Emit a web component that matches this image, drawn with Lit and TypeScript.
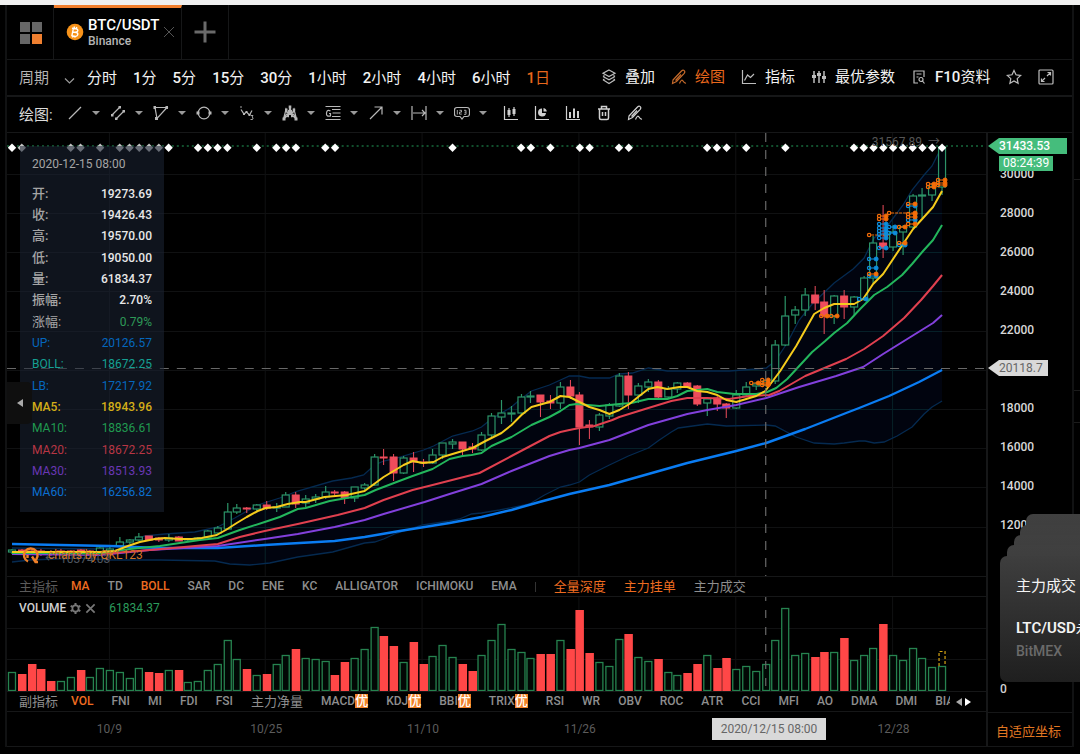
import { LitElement, html, svg, css, nothing } from "lit";
import { customElement } from "lit/decorators.js";
import { classMap } from "lit/directives/class-map.js";

type Mark = [number, number, number, string];

const X0 = 12;
const STEP = 9.8;
const cx = (i: number) => X0 + STEP * i;

// up/down flag, body top, body bottom, high, low (chart units)
const CANDLES: Array<[string, number, number, number, number]> = [
  ["g", 550, 552, 549, 554], ["r", 550, 552, 549, 555], ["r", 551, 552, 550, 554], ["r", 551, 553, 549, 556],
  ["r", 552, 554, 550, 556], ["r", 551, 553, 549, 555], ["r", 551, 552, 550, 554], ["r", 550, 553, 549, 555],
  ["r", 551, 553, 550, 555], ["g", 548, 553, 547, 554], ["g", 549, 551, 546, 553], ["g", 542, 546, 537, 547],
  ["g", 540, 542, 539, 544], ["g", 537, 540, 533, 541], ["r", 536, 540, 536, 541], ["r", 538, 540, 537, 542],
  ["g", 538, 540, 534, 542], ["r", 537, 541, 536, 541], ["g", 539, 540, 538, 541], ["g", 538, 539, 537, 540],
  ["g", 531, 537, 530, 538], ["g", 528, 533, 526, 534], ["g", 512, 529, 503, 530], ["g", 508, 512, 504, 514],
  ["r", 508, 509, 507, 513], ["g", 505, 509, 504, 512], ["r", 505, 508, 501, 510], ["g", 507, 508, 503, 512],
  ["g", 495, 507, 492, 507], ["r", 495, 504, 492, 508], ["g", 499, 503, 495, 507], ["g", 497, 499, 494, 503],
  ["g", 492, 497, 486, 499], ["r", 492, 493, 490, 496], ["r", 492, 498, 491, 504], ["g", 487, 498, 487, 502],
  ["g", 485, 488, 483, 491], ["g", 457, 485, 454, 486], ["r", 457, 458, 449, 465], ["r", 457, 473, 454, 481],
  ["g", 458, 473, 456, 474], ["r", 458, 462, 452, 472], ["r", 462, 463, 459, 467], ["g", 455, 463, 449, 464],
  ["g", 443, 455, 443, 459], ["g", 442, 444, 439, 449], ["r", 442, 449, 442, 455], ["r", 447, 449, 443, 453],
  ["g", 435, 450, 432, 451], ["g", 416, 435, 413, 438], ["g", 413, 417, 400, 424], ["g", 413, 414, 406, 422],
  ["g", 397, 413, 394, 415], ["g", 396, 397, 391, 403], ["r", 395, 402, 395, 417], ["r", 401, 403, 395, 409],
  ["g", 387, 403, 382, 409], ["r", 387, 396, 380, 399], ["r", 395, 427, 392, 445], ["r", 425, 427, 420, 439],
  ["g", 415, 427, 413, 431], ["g", 405, 416, 403, 419], ["g", 376, 406, 373, 407], ["r", 376, 395, 372, 409],
  ["g", 386, 395, 383, 403], ["g", 382, 387, 379, 392], ["r", 382, 397, 380, 399], ["g", 389, 397, 386, 399],
  ["g", 383, 389, 382, 393], ["r", 383, 387, 382, 388], ["r", 386, 404, 385, 406], ["g", 399, 403, 398, 416],
  ["r", 398, 404, 396, 411], ["r", 404, 408, 403, 418], ["g", 395, 408, 390, 409], ["g", 387, 395, 382, 396],
  ["g", 384, 386, 382, 390], ["g", 381, 385, 379, 387], ["g", 345, 381, 340, 384], ["g", 316, 345, 296, 346],
  ["g", 310, 315, 306, 324], ["g", 295, 310, 288, 316], ["r", 295, 303, 286, 310], ["r", 302, 316, 290, 334],
  ["g", 296, 316, 295, 324], ["r", 296, 307, 290, 319], ["g", 297, 307, 296, 316], ["g", 278, 299, 276, 301],
  ["g", 243, 278, 236, 283], ["r", 243, 248, 205, 258], ["g", 232, 247, 225, 251], ["g", 227, 232, 225, 255],
  ["g", 196, 227, 194, 228], ["g", 195, 196, 188, 218], ["g", 187, 195, 183, 201], ["g", 147, 187, 145, 195],
];

const VOLUME: number[] = [
  19, 17, 27, 22, 10, 10, 14, 21, 14, 23, 21, 19, 13, 23, 19, 18, 21, 21, 9, 10, 21, 27, 51, 32, 22, 16, 17, 27, 36,
  42, 33, 32, 30, 16, 29, 33, 42, 64, 55, 45, 29, 49, 27, 35, 46, 34, 27, 20, 36, 51, 67, 42, 39, 33, 37, 37, 51, 42,
  81, 38, 29, 25, 52, 57, 34, 30, 32, 19, 16, 18, 27, 36, 23, 33, 22, 25, 20, 27, 51, 83, 36, 38, 34, 39, 39, 53, 31,
  36, 43, 67, 36, 31, 43, 33, 24, 25,
];
const VOLUME_DOWN = new Set([
  1, 2, 3, 4, 7, 14, 15, 17, 24, 26, 29, 33, 34, 38, 39, 41, 42, 46, 47, 54, 55, 57, 58, 59, 63, 66, 69, 70, 72, 73,
  82, 83, 85, 89,
]);

const UP =
  "12,548 100,549 125,543 145,536 165,534 195,532 218,527 235,518 258,505 280,498 298,491 333,481 352,478 364,475 375,465 384,461 397,458 424,450 434,446 453,436 473,431 482,427 492,419 512,407 520,400 532,391 550,385 561,380 570,376 580,376 590,378 610,378 620,374 633,373 649,368 668,371 708,371 730,371 757,369 767,368 776,361 788,343 800,320 813,304 835,283 854,269 865,258 875,238 886,229 904,205 913,190 925,175 933,166 939,154 943,145";
const LB =
  "12,562 30,560 80,558 110,560 160,560 215,561 230,564 250,565 270,563 298,557 333,552 365,543 375,542 384,539 395,534 423,525 450,521 460,519 472,514 482,513 500,510 530,504 545,495 561,487 570,485 580,482 590,475 610,465 629,456 649,448 660,440 672,432 679,428 708,424 727,426 767,425 776,426 797,437 815,443 835,444 845,443 860,441 866,441 875,443 885,442 898,436 913,427 925,414 933,407 943,401";
const LINES: Array<[string, string]> = [
  ["ma60", "12,544 60,545 110,546 160,548 218,548 265,545 300,543 335,541 365,537 400,531 450,523 482,517 512,510 540,502 570,494 610,485 649,474 688,463 737,451 767,443 806,429 847,413 860,408 890,396 920,382 943,370"],
  ["ma30", "12,554 100,555 150,550 218,546 265,539 298,534 335,527 365,520 384,514 425,502 450,494 482,484 512,471 550,456 570,450 580,448 610,440 649,425 688,414 708,410 737,405 767,398 800,387 837,376 864,367 884,354 913,336 934,323 943,315"],
  ["ma20", "12,552 100,554 150,550 218,544 240,537 265,531 298,524 338,515 365,508 384,500 413,490 433,485 480,473 512,456 550,436 561,432 570,430 580,428 595,426 613,420 620,417 649,408 672,401 688,398 708,398 730,399 750,396 770,395 780,391 806,376 847,359 865,349 884,336 905,318 922,300 934,286 943,275"],
  ["ma10", "12,553 100,553 130,549 160,546 200,540 218,538 240,530 265,522 280,517 298,509 306,508 330,501 347,498 365,495 376,490 397,482 413,476 433,469 450,459 463,456 472,455 482,453 492,446 512,437 532,425 550,417 561,411 570,405 577,404 600,406 620,404 632,403 649,399 668,399 678,396 688,391 708,389 718,392 735,394 757,394 768,392 777,388 788,379 813,352 826,341 835,333 848,323 861,309 875,295 888,287 903,275 913,264 924,251 934,240 943,225"],
  ["ma5", "12,552 100,552 115,551 128,546 140,542 155,539 165,538 180,539 192,539 202,538 217,535 226,530 237,523 247,517 258,511 266,508 277,507 288,504 300,502 306,502 325,497 347,495 365,491 384,477 404,465 413,461 423,463 434,462 443,457 463,451 473,448 486,441 502,433 512,425 522,415 532,407 550,402 561,396 570,397 580,402 590,407 600,410 610,414 620,410 630,404 640,396 649,389 658,387 668,389 680,387 688,387 698,391 708,392 718,395 727,400 737,402 747,399 757,396 766,391 781,371 797,346 815,314 825,308 835,304 855,304 864,299 874,284 884,274 902,247 914,229 924,218 934,207 943,191"],
];

const DIAMONDS = [
  0, 1, 6, 7, 9, 11, 12, 13, 14, 15, 16, 19, 20, 21, 22, 25, 27, 28, 29, 32, 33, 45, 52, 53, 55, 58, 59, 62, 63, 71,
  72, 73, 75, 79, 86, 87, 88, 89, 90, 91, 92, 93, 94, 95,
];

// hollow end x, solid end x, y, colour class
const TRADES: Mark[] = [
  [752, 759, 383, "o"], [763, 769, 380, "o"], [763, 769, 383, "o"], [763, 769, 385, "o"],
  [822, 828, 316, "o"], [832, 838, 316, "o"], [860, 867, 299, "b"],
  [870, 877, 259, "b"], [870, 877, 268, "b"], [870, 877, 276, "b"], [870, 877, 274, "o"], [870, 887, 235, "o"],
  [880, 887, 224, "b"], [880, 887, 228, "b"], [880, 887, 231, "b"], [880, 887, 234, "b"], [880, 887, 238, "b"],
  [880, 887, 248, "b"], [880, 887, 216, "o"], [880, 887, 219, "o"],
  [890, 896, 227, "b"], [890, 896, 233, "b"], [900, 906, 245, "b"], [900, 906, 227, "o"], [890, 916, 213, "o"],
  [900, 906, 243, "o"], [909, 916, 206, "b"], [909, 916, 220, "b"], [909, 916, 204, "o"], [909, 916, 214, "o"],
  [909, 916, 217, "o"], [909, 916, 224, "o"], [929, 935, 184, "o"], [929, 935, 187, "o"],
  [939, 946, 180, "o"], [939, 946, 183, "o"], [939, 946, 185, "o"],
];

const READOUT: Array<[string, string, string]> = [
  ["开", "19273.69", "plain"], ["收", "19426.43", "plain"], ["高", "19570.00", "plain"], ["低", "19050.00", "plain"],
  ["量", "61834.37", "plain"], ["振幅", "2.70%", "plain"], ["涨幅", "0.79%", "gain"],
  ["UP", "20126.57", "band"], ["BOLL", "18672.25", "mid"], ["LB", "17217.92", "band"], ["MA5", "18943.96", "m5"],
  ["MA10", "18836.61", "m10"], ["MA20", "18672.25", "m20"], ["MA30", "18513.93", "m30"], ["MA60", "16256.82", "m60"],
];

const PERIODS: Array<[string, string]> = [
  ["", "分时"], ["1", "分"], ["5", "分"], ["15", "分"], ["30", "分"], ["1", "小时"], ["2", "小时"], ["4", "小时"],
  ["6", "小时"], ["1", "日"],
];
const MAIN = ["MA", "TD", "BOLL", "SAR", "DC", "ENE", "KC", "ALLIGATOR", "ICHIMOKU", "EMA"];
const ORDERS = ["全量深度", "主力挂单", "主力成交"];
const SUB = [
  "VOL", "FNI", "MI", "FDI", "FSI", "主力净量", "MACD*", "KDJ*", "BBI*", "TRIX*", "RSI", "WR", "OBV", "ROC", "ATR",
  "CCI", "MFI", "AO", "DMA", "DMI", "BIAS",
];
const PRICES = ["30000", "28000", "26000", "24000", "22000", "", "18000", "16000", "14000", "12000"];
const DATES = ["10/9", "10/25", "11/10", "11/26", "", "12/28"];

const icon = (body: unknown) => html`<svg class="icon" viewBox="0 0 16 16" aria-hidden="true">${body}</svg>`;

const PEN = svg`<path d="M2 11 10.500 2q1.500-1.500 2.700-.4t0 2.700L5.500 12.500 1.500 14.500ZM4.500 11.500 10 5.500M8.500 14.500q2-5 3.500-2.500t3 2"/>`;

const TOOLS: Array<[string, unknown]> = [
  ["线段", svg`<path d="M2 14 14 2"/>`],
  ["平行线", svg`<path d="M2 10 10 2M6 14 14.500 5.500"/><path class="solid" d="M1 9h2.500v2.500H1zM8.500 1H11v2.500H8.500zM5 12.500h2.500V15H5zM12.500 5H15v2.500h-2.500z"/>`],
  ["形状", svg`<path d="M2 2.500h12L4 13.500Z"/><path class="solid" d="M.5 1H3v3H.5zM12.500 1H15v3h-2.500zM2 12h3v3H2z"/>`],
  ["圆", svg`<circle cx="8" cy="8" r="5.800"/><path class="solid" d="M.5 6.500h3v3h-3zM12.500 6.500h3v3h-3z"/>`],
  ["波浪", svg`<path d="m2 4.500 3 4.500 2.500-2 3 3L13 5.500"/><path class="solid" d="M4 8h2v2H4zM6.500 6h2v2h-2zM9.500 9h2v2h-2z"/><path d="M1 2h2M12 10.500h2l-1 1.500q2 .5.500 2.500h-2" stroke-width=".9"/>`],
  ["形态", svg`<path d="M1.500 14 4 4.500 6 11l2-9 2 9 2-6.500 2.500 9.500M1.500 14 6 7l8.500 7M14.500 14 10 7 1.500 14"/><path class="solid" d="M.5 12.500h3v3h-3zM3 3.500h2.500V6H3zM6.700.5h2.600v3H6.700zM10.700 3.500h2.500V6h-2.500zM12.500 12.500h3v3h-3zM5 9.500h2V12H5zM9 9.500h2V12H9zM6 5h4v5H6z"/>`],
  ["斐波那契", svg`<path d="M.5 1.500h15M7 4.500h8.500M7.500 8h8M7 11.500h8.500M.5 14.500h15M5.500 6Q2 4 1.500 8t4 3V8.500H4"/>`],
  ["箭头", svg`<path d="M2 14 14 2M6.500 2H14v7.500"/>`],
  ["测量", svg`<path d="M1 1v14M15 1v14M2 8h12M11 5l3 3-3 3"/>`],
  ["标注", svg`<path d="M3 2.500h10q2.500 0 2.500 2.500v4q0 2.500-2.500 2.500h-3L8 14l-2-2.500H3Q.5 11.500.5 9V5Q.5 2.500 3 2.500Z"/><path d="M3.300 5v4.500M5.500 5.300h2v1.800h-2v2h2.300M10 5.300h2v4h-2M10.500 7.200H12" stroke-width=".9"/>`],
];

const PLAIN_TOOLS: Array<[string, unknown]> = [
  ["K线", svg`<path d="M1.500 1v13.500H15"/><path d="M6 3v9M11 2v9"/><path class="solid" d="M4.500 5h3v5h-3zM9.500 4h3v5h-3z"/>`],
  ["筹码", svg`<path d="M1.500 1v13.500H15"/><path class="solid" d="M8 3.500a4 4 0 1 0 4 4.500H8ZM9.500 3v3.500h3.300Q12.500 3.500 9.500 3Z"/>`],
  ["成交量", svg`<path d="M1.500 1v13.500H15"/><path class="solid" d="M4 7h2v6H4zM8 3.500h2V13H8zM12 6h2v7h-2z"/>`],
  ["删除", svg`<path d="M2 4h12M5.500 4V1.500h5V4M3.500 4v9q0 1.500 1.500 1.500h6q1.500 0 1.500-1.500V4M6.500 7v4M9.500 7v4" stroke-width="1.500"/>`],
  ["清除画笔", PEN],
];

@customElement("price-chart")
class PriceChart extends LitElement {
  static styles = css`
    :host { display: block; position: absolute; inset: 0; }
    svg { display: block; width: 100%; height: 100%; }
    .grid { stroke: #101112; }
    .grid.in { stroke: #062028; }
    .band { fill: #01040f; }
    .edge { fill: none; stroke: #052a50; stroke-width: 1.3; }
    .up { fill: #00050c; stroke: #2c9468; stroke-width: 1.2; }
    .down { fill: #ef4c5c; stroke: #ef4c5c; stroke-width: 1; }
    .line { fill: none; stroke-width: 2; stroke-linejoin: round; }
    .ma5 { stroke: #f5cb1c; } .ma10 { stroke: #23b65c; } .ma20 { stroke: #e0404f; }
    .ma30 { stroke: #8240dc; } .ma60 { stroke: #0a7cf2; stroke-width: 2.4; }
    .last { stroke: #176a3c; stroke-width: 1.6; stroke-dasharray: 2 3; }
    .cross { stroke: #686868; stroke-width: 1.2; stroke-dasharray: 9 8; }
    .gem { fill: #fff; }
    .gem.under { fill: #c4c4c4; }
    .o { stroke: #f46d08; --dot: #f46d08; } .b { stroke: #0d8edc; --dot: #0d8edc; }
    .ring { fill: none; stroke-width: 1.2; } .dot { fill: var(--dot); }
    .tie { stroke-width: 1.2; stroke-dasharray: 3 1; }
  `;
  render() {
    const rows = [174, 213, 252, 291, 331, 370, 409, 448, 487, 527];
    const cols = [10, 26, 42, 58, 74, 90].map(cx);
    const area = UP + " " + LB.split(" ").reverse().join(" ");
    return html`<svg viewBox="7 133 980 443" preserveAspectRatio="none" role="img" aria-label="BTC/USDT 日K线">
      <defs><clipPath id="inside"><polygon points=${area} /></clipPath></defs>
      <polygon class="band" points=${area} />
      ${["", "in"].map((k) => svg`<g clip-path=${k ? "url(#inside)" : "none"}>
        ${rows.map((y) => svg`<path class="grid ${k}" d="M7 ${y + 0.5}H987"/>`)}
        ${cols.map((x) => svg`<path class="grid ${k}" d="M${Math.floor(x) - 0.5} 133V576"/>`)}</g>`)}
      <polyline class="edge" points=${UP} /><polyline class="edge" points=${LB} />
      <path class="last" d="M7 146H987" />
      ${CANDLES.map(([d, t, b, h, l], i) => {
        const x = Math.round(cx(i)), c = d === "g" ? "up" : "down";
        return svg`<path class=${c} d="M${x} ${h}V${t}M${x} ${b}V${l}"/><rect class=${c} x=${x - 3.5} y=${t} width="7" height=${Math.max(1, b - t)} />`;
      })}
      ${LINES.map(([c, p]) => svg`<polyline class="line ${c}" points=${p}/>`)}
      ${TRADES.map(([a, b, y, c]) => svg`<g class=${c}><circle class="ring" cx=${a} cy=${y} r="1.700"/><path class="tie" d="M${a + 2} ${y}H${b}"/><circle class="dot" cx=${b} cy=${y} r="2"/></g>`)}
      <path class="cross" d="M7 368.500H987" /><path class="cross" d="M766.500 133V576" />
      ${DIAMONDS.map((i) => svg`<path class="gem ${i > 0 && i < 16 ? "under" : ""}" d="M${cx(i)} 143.500l4.200 4.200-4.200 4.200-4.200-4.200z"/>`)}
    </svg>`;
  }
}

@customElement("volume-chart")
class VolumeChart extends LitElement {
  static styles = css`
    :host { display: block; position: absolute; inset: 0; }
    svg { display: block; width: 100%; height: 100%; }
    .grid { stroke: #101112; }
    .up { fill: #020805; stroke: #26834f; stroke-width: 1.3; }
    .down { fill: #ff4747; }
    .guess { fill: none; stroke: #d6a414; stroke-width: 1.2; stroke-dasharray: 3 2; }
    .cross { stroke: #686868; stroke-width: 1.2; stroke-dasharray: 8 9; }
  `;
  render() {
    return html`<svg viewBox="7 597 980 94" preserveAspectRatio="none" role="img" aria-label="成交量">
      <path class="grid" d="M7 628.500H987M7 659.500H987" />
      ${[10, 26, 42, 58, 74, 90].map((i) => svg`<path class="grid" d="M${Math.floor(cx(i)) - 0.5} 597V691"/>`)}
      ${VOLUME.map((v, i) => {
        const x = Math.round(cx(i));
        return VOLUME_DOWN.has(i)
          ? svg`<rect class="down" x=${x - 4} y=${691 - v} width="8.500" height=${v} />`
          : svg`<rect class="up" x=${x - 3.5} y=${691.5 - v} width="7" height=${v - 1} />`;
      })}
      <path class="guess" d="M940 666V651.500H946V666" />
      <path class="cross" d="M766.500 593V691" />
    </svg>`;
  }
}

@customElement("app-root")
class AppRoot extends LitElement {
  static styles = css`
    :host {
      display: block; background: #000; color: #e6e6e6; overflow: hidden; position: relative;
      font: 12px/16px Roboto, "Noto Sans CJK SC", sans-serif;
    }
    * { box-sizing: border-box; }
    button { background: none; border: 0; padding: 0; margin: 0; color: inherit; font: inherit; white-space: nowrap; cursor: pointer; }
    .page { display: flex; flex-direction: column; min-height: 100vh; border-top: 5px solid #f0f0f0; }
    .frame { flex: 1; display: grid; grid-template-columns: 7px minmax(0, 1fr) 8px; padding-bottom: 7px; }
    .gutter { border-right: 2px solid #111213; }
    .edge { border-left: 2px solid #111213; display: flex; flex-direction: column; }
    .edge i { border-bottom: 1px solid #1b1b1b; }
    .edge .e1 { height: 175px; } .edge .e2 { height: 211px; } .edge .e3 { height: 32px; }
    .work { display: flex; flex-direction: column; border-bottom: 1px solid #161718; min-width: 0; }
    .icon { width: 16px; height: 16px; flex: none; fill: none; stroke: currentColor; stroke-width: 1.2; display: block; }
    .icon .solid { fill: currentColor; stroke: none; }

    .tabs { display: flex; height: 55px; border-bottom: 1px solid #161718; }
    .home { width: 47px; padding: 0 12px; border-right: 1px solid #161718; }
    .home svg { width: 23px; height: 23px; display: block; }
    .tab { display: flex; align-items: center; width: 128px; padding: 0 7px 3px 12px; gap: 4px; border-top: 3px solid #f27f2d; border-right: 1px solid #161718; }
    .coin { width: 18px; height: 18px; flex: none; }
    .pair { flex: 1; font-weight: 500; color: #b5b5b5; line-height: 14px; }
    .pair b { display: block; font-size: 15px; line-height: 17px; font-weight: 500; color: #fff; }
    .close { color: #555; width: 12px; }
    .close svg { width: 12px; height: 12px; display: block; }
    .add { width: 47px; display: grid; place-items: center; border-right: 1px solid #161718; color: #6a6a6a; }
    .add svg { width: 22px; height: 22px; }

    .periods { display: flex; align-items: center; height: 37px; padding: 0 19px 0 12px; border-bottom: 2px solid #161718; font-size: 15px; line-height: 20px; color: #f2f2f2; }
    .periods b { font-weight: 500; }
    .times { display: flex; gap: 16px; }
    .cycle { display: flex; align-items: center; gap: 15px; margin-right: 12px; color: #b4b4b4; }
    .cycle svg { width: 11px; height: 8px; margin-top: 6px; fill: none; stroke: #999; stroke-width: 1.2; }
    .times .on, .links .on { color: #e8671c; }
    .links { display: flex; flex: 1; gap: 16px; margin: 0 0 2px 51px; }
    .links button { display: flex; align-items: center; gap: 8px; }
    .links .icon { color: #bdbdbd; }
    .links .on .icon { color: #c56a2b; }
    .links .end { margin-left: auto; }
    .draw { display: flex; align-items: center; height: 36px; padding: 0 12px; border-bottom: 1px solid #161718; color: #b8b8b8; }
    .draw .name { font-size: 15px; line-height: 20px; color: #dcdcdc; width: 48px; }
    .tool { display: flex; align-items: center; gap: 9px; width: 43px; padding-bottom: 3px; }
    .tool .caret { width: 8px; height: 4px; fill: #999; }
    .plain { display: flex; gap: 15px; margin-left: 6px; padding-bottom: 3px; color: #d0d0d0; }

    .charts { flex: 1; display: grid; grid-template: minmax(444px, 1fr) 20px 95px 20px 34px / minmax(0, 1fr) 86px; }
    .cell { position: relative; min-width: 0; border-bottom: 1px solid #161718; }
    .dates.cell { border-bottom: 0; }
    .axis { border-left: 2px solid #161718; }
    .scale { display: flex; flex-direction: column; padding: 21px 0 33px 12px; position: relative; font-weight: 500; color: #d8d8d8; }
    .scale span { flex: 1; display: flex; align-items: center; }
    .flag { position: absolute; left: 0; display: flex; align-items: center; height: 16px; padding-left: 11px; clip-path: polygon(0 50%, 11px 0, 100% 0, 100% 100%, 11px 100%); }
    .now { top: 5px; width: 79px; background: #45bd7c; color: #fff; font-size: 12px; }
    .cursor { top: 227px; width: 60px; background: #d9d9d9; color: #666; font-weight: 400; }
    .timer { position: absolute; left: 11px; top: 23px; padding: 0 4px; background: #45bd7c; color: #fff; line-height: 15px; font-weight: 400; }

    .panel { position: absolute; left: 13px; top: 13px; width: 144px; height: 366px; padding: 10px 12px; background: rgba(28, 36, 52, .55); }
    .panel h2 { margin: 0 0 11px; font-size: 12px; line-height: 16px; font-weight: 400; color: #a5a5a5; }
    .panel dl { margin: 0; height: 320px; display: grid; grid-auto-rows: 1fr; }
    .panel dl div { display: flex; justify-content: space-between; align-items: center; }
    .panel dd { margin: 0; }
    .plain-row { color: #e8e8e8; font-weight: 500; }
    .plain-row dt, .gain-row dt { color: #a5a5a5; font-size: 13px; }
    .gain-row { color: #2e9a58; }
    .band-row { color: #0567bd; } .mid-row { color: #15a093; } .m5-row { color: #d3ae18; font-weight: 500; }
    .m10-row { color: #209a50; } .m20-row { color: #b83644; } .m30-row { color: #6937b4; } .m60-row { color: #0b6fd0; }
    .fold { position: absolute; left: 0; top: 249px; width: 25px; height: 42px; border-radius: 0 5px 5px 0; background: #0f0f0f; display: grid; place-items: center; }
    .fold svg, .pager svg { width: 6px; height: 8px; fill: #aaa; display: block; }
    .peak { position: absolute; right: 46px; top: 1px; color: #555; }
    .low { position: absolute; left: 38px; bottom: 9px; color: #4f5760; }
    .brand { position: absolute; left: 15px; bottom: 12px; display: flex; align-items: center; gap: 8px; color: #d27426; line-height: 18px; }
    .brand svg { width: 18px; height: 18px; fill: none; stroke: #f08028; stroke-width: 2.4; }

    .strip { display: flex; align-items: center; gap: 18px; padding-left: 12px; font-weight: 500; color: #8e8e8e; white-space: nowrap; line-height: 19px; }
    .strip .cn { font-size: 13px; font-weight: 400; }
    .strip .title { margin-right: -5px; }
    .dim { color: #5a5a5a; }
    .strip .on { color: #ee6c20; }
    .strip i { width: 1px; height: 10px; background: #333; }
    .list { display: flex; gap: 18px; overflow: hidden; flex: 1; }
    .best { display: inline-block; background: #f08028; color: #fff; font-size: 13px; line-height: 14px; }
    .pager { display: flex; gap: 3px; padding-right: 15px; margin-left: -12px; }
    .pager .next svg { fill: #fff; }

    .vhead { position: relative; display: flex; align-items: center; padding: 3px 12px; gap: 4px; font-weight: 500; color: #d0d0d0; }
    .vhead .icon { width: 11px; height: 11px; color: #777; stroke-width: 2; }
    .vhead output { margin-left: 9px; color: #2b9c5c; font-weight: 400; }
    .zero { display: flex; align-items: flex-end; padding-left: 12px; font-weight: 500; color: #d0d0d0; line-height: 6px; }
    .dates { display: flex; align-items: center; padding: 0 14px 0 24px; color: #5c5c5c; }
    .dates span { flex: 1; text-align: center; }
    .dates .stamp { position: absolute; left: 705px; top: 6px; width: 114px; line-height: 22px; background: #d9d9d9; color: #666; }
    .fit { display: flex; align-items: center; padding: 4px 0 0 8px; color: #e07722; font-size: 13px; border-top: 1px solid #161718; border-left: 2px solid #161718; }

    .stack { position: absolute; right: 0; top: 514px; width: 80px; height: 168px; }
    .sheet { position: absolute; right: 0; bottom: 0; border-radius: 7px 0 0 7px; background: linear-gradient(#404040, #303030); }
    .s1 { width: 54px; height: 168px; } .s2 { width: 60px; height: 157px; } .s3 { width: 66px; height: 147px; } .s4 { width: 73px; height: 137px; }
    .front { width: 80px; height: 126px; padding: 20px 0 0 16px; background: linear-gradient(#3e3e3e, #1f1f1f); white-space: nowrap; overflow: hidden; font-size: 15px; line-height: 20px; color: #f4f4f4; }
    .front p { margin: 0; }
    .front .coinpair { margin-top: 22px; }
    .front b { font-weight: 600; }
    .front .venue { color: #6a6a6a; font-size: 14px; line-height: 26px; font-weight: 500; }
  `;

  private indicator(name: string, on: boolean) {
    const best = name.endsWith("*");
    const text = best ? name.slice(0, -1) : name;
    return html`<button class=${classMap({ on, cn: text > "一" })}>${text}${best ? html`<span class="best">优</span>` : nothing}</button>`;
  }

  render() {
    return html`<div class="page"><div class="frame">
      <div class="gutter"></div>
      <main class="work">
        <nav class="tabs">
          <button class="home" aria-label="布局"><svg viewBox="0 0 23 23"><path fill="#666" d="M1 1h10v10H1zM13 1h10v10H13zM1 13h10v10H1z"/><path fill="#f08030" d="M13 13h10v10H13z"/></svg></button>
          <div class="tab">
            <svg class="coin" viewBox="0 0 18 18"><circle cx="9" cy="9" r="8.300" fill="#f7931a"/><path d="m7.500 4.800-1.700 8.400M6 5.300l4 .5q2.300.5 1.700 2.200T7.500 9.100M7 9l3.200.5q2.200.6 1.400 2.500T8.300 13.200l-3-.4M8.500 3.500 8.200 5M10.700 4l-.3 1.500M6.900 12.800l-.3 1.700M9.100 13l-.3 1.700" fill="none" stroke="#fff" stroke-width="1.400"/></svg>
            <div class="pair"><b>BTC/USDT</b>Binance</div>
            <button class="close" aria-label="关闭"><svg viewBox="0 0 12 12"><path d="m1 1 10 10M11 1 1 11" stroke="currentColor"/></svg></button>
          </div>
          <button class="add" aria-label="添加"><svg viewBox="0 0 22 22"><path d="M11 .5v21M.5 11h21" stroke="currentColor" stroke-width="3"/></svg></button>
        </nav>

        <div class="periods">
          <button class="cycle">周期<svg viewBox="0 0 11 8"><path d="m1 1.500 4.500 4.500L10 1.500"/></svg></button>
          <div class="times">${PERIODS.map(([n, unit]) => html`<button class=${classMap({ on: unit === "日" })}><b>${n}</b>${unit}</button>`)}</div>
          <div class="links">
            <button>${icon(svg`<path d="M8 1 14 4.200 8 7.500 2 4.200ZM2 7.500l6 3.300 6-3.300M2 10.800 8 14.500l6-3.700M3.500 6.500 2 7.500M12.500 6.500l1.500 1M3.500 10 2 10.800M12.500 10l1.500.8"/>`)}叠加</button>
            <button class="on">${icon(PEN)}绘图</button>
            <button>${icon(svg`<path d="M1.500 1v13.500H15M3.500 11.500l3-5.500 3 2.500L13 5"/>`)}指标</button>
            <button>${icon(svg`<path d="M3 2v12M8 2v12M13 2v12" stroke-width="1.500"/><path class="solid" d="M1 6h4v3H1zM6 4h4v3H6zM11 7h4v3h-4z"/>`)}最优参数</button>
            <button>${icon(svg`<path d="M7 14H3V2h10v6M5.500 5h5M5.500 8h2"/><circle cx="10" cy="10.500" r="2"/><path d="m11.500 12 2 2.500"/>`)}<span><b>F10</b>资料</span></button>
            <button class="end" aria-label="收藏">${icon(svg`<path d="m8 1.500 2 4.300 4.700.6-3.500 3.200.9 4.700L8 12l-4.100 2.300.9-4.700L1.300 6.400 6 5.800Z"/>`)}</button>
            <button aria-label="全屏">${icon(svg`<rect x="1" y="1" width="14" height="14" rx="1"/><path d="M9.500 3.500h3v3M12.500 3.500 9 7M6.500 12.500h-3v-3M3.500 12.500 7 9"/>`)}</button>
          </div>
        </div>

        <div class="draw">
          <span class="name">绘图:</span>
          ${TOOLS.map(([name, art]) => html`<button class="tool" aria-label=${name}>${icon(art)}<svg class="caret" viewBox="0 0 8 4"><path d="M0 0h8L4 4z"/></svg></button>`)}
          <div class="plain">${PLAIN_TOOLS.map(([name, art]) => html`<button aria-label=${name}>${icon(art)}</button>`)}</div>
        </div>

        <section class="charts">
          <div class="cell">
            <price-chart></price-chart>
            <span class="peak">31567.89 &nbsp;→</span>
            <span class="low">← 10374.03</span>
            <div class="brand"><svg viewBox="0 0 18 18"><path d="M6 15.500a6.800 6.800 0 1 1 6-.2M10 10.500l3.500 5.500h2.500M5.500 9v3"/></svg>charts by QKL123</div>
            <aside class="panel"><h2>2020-12-15 08:00</h2>
              <dl>${READOUT.map(([k, v, c]) => html`<div class="${c}-row"><dt>${k}:</dt><dd>${v}</dd></div>`)}</dl>
            </aside>
            <button class="fold" aria-label="收起"><svg viewBox="0 0 6 8"><path d="M6 0v8L0 4z"/></svg></button>
          </div>
          <div class="axis scale">
            ${PRICES.map((p) => html`<span>${p}</span>`)}
            <div class="flag now">31433.53</div><div class="timer">08:24:39</div><div class="flag cursor">20118.7</div>
          </div>

          <div class="cell strip"><span class="cn title dim">主指标</span>
            ${MAIN.map((m) => this.indicator(m, m === "MA" || m === "BOLL"))}<i></i>
            ${ORDERS.map((m) => this.indicator(m, m !== "主力成交"))}
          </div>
          <div class="axis"></div>

          <div class="cell"><volume-chart></volume-chart>
            <div class="vhead">VOLUME
              <button aria-label="设置">${icon(svg`<circle cx="8" cy="8" r="4.500" stroke-width="2.500"/><path d="M8 0v3M8 13v3M1 4l3 2M12 10l3 2M1 12l3-2M12 6l3-2" stroke-width="3"/>`)}</button>
              <button aria-label="移除">${icon(svg`<path d="m2 2 12 12M14 2 2 14" stroke-width="2.500"/>`)}</button>
              <output>61834.37</output>
            </div>
          </div>
          <div class="axis zero">0</div>

          <div class="cell strip"><span class="cn title">副指标</span>
            <div class="list">${SUB.map((m) => this.indicator(m, m === "VOL"))}</div>
            <div class="pager"><button aria-label="上一页"><svg viewBox="0 0 6 8"><path d="M6 0v8L0 4z"/></svg></button><button class="next" aria-label="下一页"><svg viewBox="0 0 6 8"><path d="M0 0v8l6-4z"/></svg></button></div>
          </div>
          <div class="axis"></div>

          <div class="cell dates">${DATES.map((d) => html`<span>${d}</span>`)}<span class="stamp">2020/12/15 08:00</span></div>
          <button class="fit">自适应坐标</button>
        </section>
      </main>
      <div class="edge"><i class="e1"></i><i class="e2"></i><i class="e3"></i></div>
    </div></div>
    <aside class="stack"><div class="sheet s1"></div><div class="sheet s2"></div><div class="sheet s3"></div><div class="sheet s4"></div>
      <div class="sheet front"><p>主力成交</p><p class="coinpair"><b>LTC/USD</b>永续</p><p class="venue">BitMEX</p></div>
    </aside>`;
  }
}
